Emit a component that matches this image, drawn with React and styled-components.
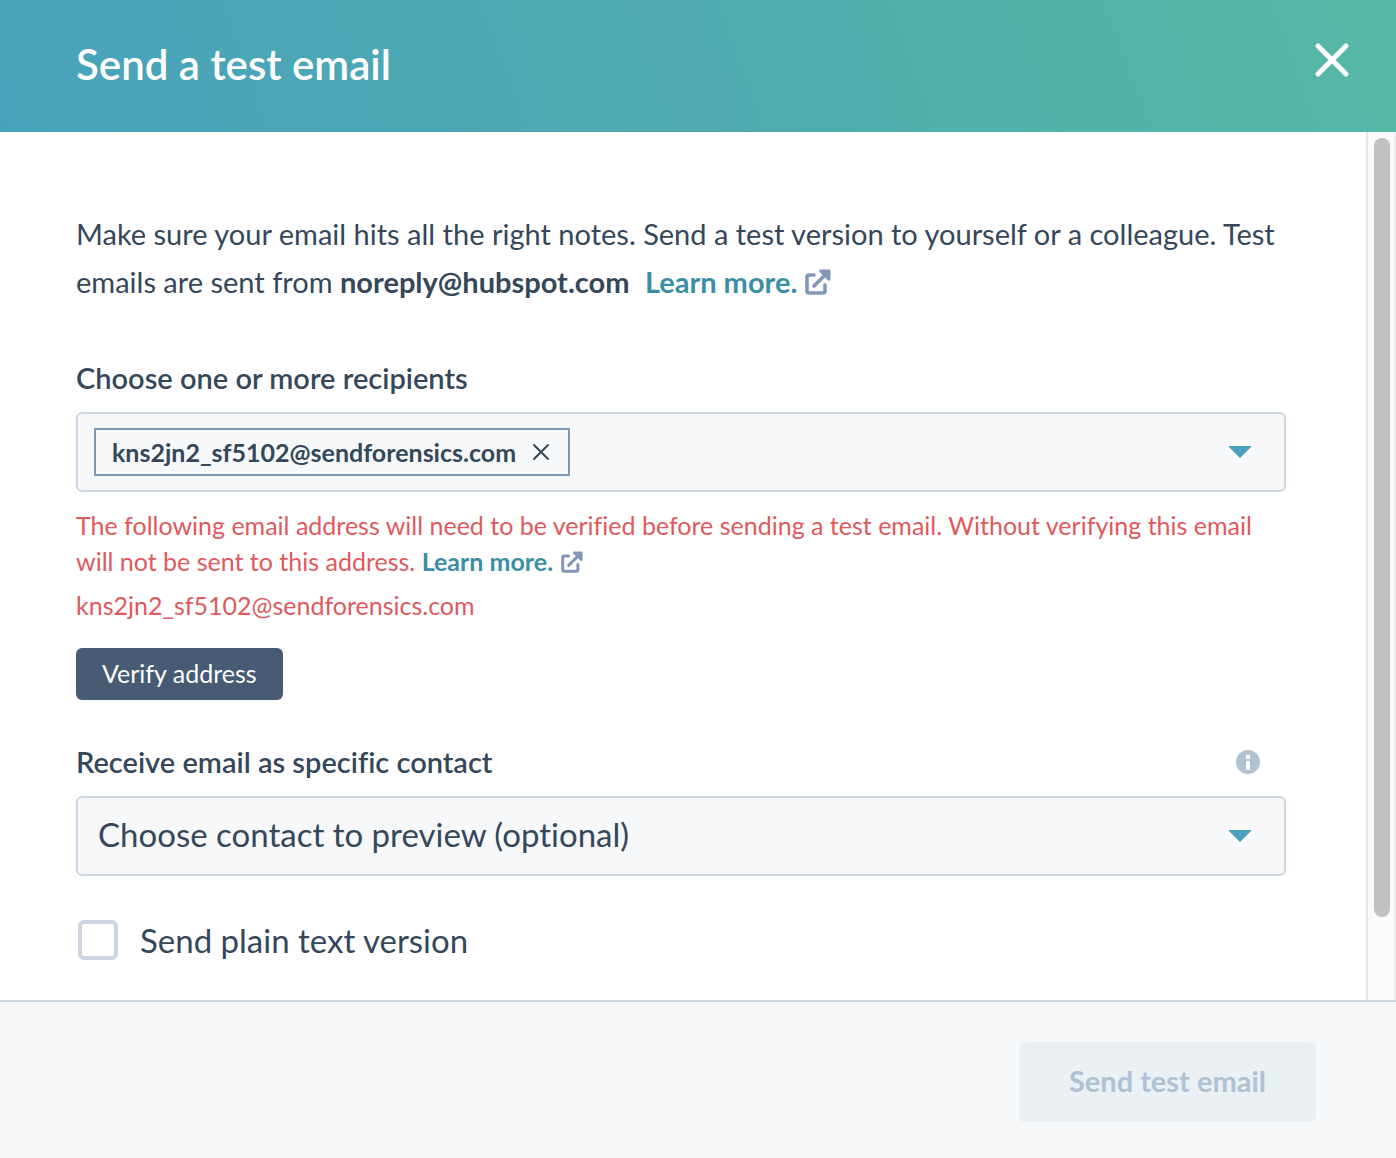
import React, { useState } from 'react';
import styled, { createGlobalStyle } from 'styled-components';

const GlobalStyle = createGlobalStyle`
  * {
    box-sizing: border-box;
  }

  body {
    margin: 0;
    color: #35475a;
    font-family: Lato, 'Open Sans', sans-serif;
    font-variant-ligatures: none;
  }

  button,
  select,
  input {
    font-family: inherit;
    font-variant-ligatures: inherit;
    color: inherit;
  }
`;

const Panel = styled.div`
  display: flex;
  flex-direction: column;
  min-height: 100vh;
  background: #ffffff;
`;

const Header = styled.header`
  display: flex;
  align-items: flex-start;
  justify-content: space-between;
  padding: 38px 42px 42px 76px;
  background: linear-gradient(70deg, #48a2bb 0%, #4fabb0 50%, #56b9a6 100%);
`;

const Title = styled.h1`
  margin: 0;
  color: #ffffff;
  font-size: 42px;
  font-weight: 600;
  line-height: 52px;
`;

const IconButton = styled.button`
  display: flex;
  align-items: center;
  justify-content: center;
  padding: 0;
  border: none;
  background: none;
  cursor: pointer;
`;

const CloseButton = styled(IconButton)`
  padding: 2px;
  color: #ffffff;
`;

const Body = styled.div`
  display: flex;
  flex: 1;
`;

const Content = styled.main`
  flex: 1;
  min-width: 0;
  padding: 78px 80px 40px 76px;
`;

const ScrollTrack = styled.div`
  width: 30px;
  padding: 6px 4px 6px 6px;
  border-left: 2px solid #e6e6e6;
  border-right: 2px solid #eeeeee;
  background: #fafafa;
`;

const ScrollThumb = styled.div`
  height: 91%;
  border-radius: 8px;
  background: #c1c1c1;
`;

const Intro = styled.p`
  margin: 0 0 50px;
  font-size: 29px;
  line-height: 48px;
`;

const LearnMoreLink = styled.a`
  margin-left: ${props => props.$gap || '0'};
  color: #3b8ea5;
  font-weight: 700;
  text-decoration: none;

  svg {
    margin-left: 8px;
    vertical-align: -2px;
  }
`;

const LabelRow = styled.div`
  display: flex;
  align-items: center;
  justify-content: space-between;
  padding-right: 26px;
  margin-bottom: 12px;
`;

const Label = styled.label`
  font-size: 29px;
  font-weight: 600;
  line-height: 44px;
`;

const RecipientBox = styled.div`
  display: flex;
  align-items: center;
  height: 80px;
  padding: 0 32px 0 16px;
  border: 2px solid #cbd6e2;
  border-radius: 6px;
  background: #f6f8fa;
`;

const Tag = styled.span`
  display: flex;
  align-items: center;
  gap: 16px;
  height: 48px;
  padding: 0 18px 0 16px;
  border: 2px solid #7c98b6;
  font-size: 25px;
  font-weight: 700;
`;

const RecipientInput = styled.input`
  flex: 1;
  min-width: 0;
  border: none;
  outline: none;
  background: transparent;
  font-size: 25px;
`;

const ErrorText = styled.p`
  margin: ${props => props.$top} 0 0;
  color: #e0595c;
  font-size: 25px;
  line-height: 36px;
`;

const Button = styled.button`
  border: none;
  border-radius: 6px;
  cursor: pointer;
`;

const VerifyButton = styled(Button)`
  display: block;
  height: 52px;
  margin: 25px 0 40px;
  padding: 0 26px 2px;
  background: #485b74;
  color: #ffffff;
  font-size: 25px;
`;

const SelectWrapper = styled.div`
  display: grid;
  align-items: center;

  > * {
    grid-area: 1 / 1;
  }

  svg {
    justify-self: end;
    margin-right: 34px;
    pointer-events: none;
  }
`;

const Select = styled.select`
  appearance: none;
  width: 100%;
  height: 80px;
  padding: 0 72px 4px 20px;
  border: 2px solid #cbd6e2;
  border-radius: 6px;
  background: #f6f8fa;
  font-size: 33px;
`;

const CheckboxRow = styled.label`
  display: flex;
  align-items: center;
  gap: 22px;
  margin-top: 44px;
  padding-left: 2px;
  font-size: 33px;
  line-height: 40px;
`;

const Checkbox = styled.input`
  appearance: none;
  width: 40px;
  height: 40px;
  margin: 0;
  border: 4px solid #cbd6e2;
  border-radius: 6px;
  background: #ffffff;

  &:checked {
    background: #48a2bb;
  }
`;

const Footer = styled.footer`
  display: flex;
  justify-content: flex-end;
  padding: 40px 80px 36px;
  border-top: 2px solid #cbd6e2;
  background: #f6f8fa;
`;

const SendButton = styled(Button)`
  height: 80px;
  padding: 0 50px 4px;
  background: #eaf0f4;
  color: #b0c1d4;
  font-size: 29px;
  font-weight: 700;
`;

const CrossIcon = ({ size, inset, stroke }) => {
  const end = size - inset;

  return (
    <svg width={size} height={size} viewBox={`0 0 ${size} ${size}`} aria-hidden="true">
      <path
        d={`M${inset} ${inset}L${end} ${end}M${end} ${inset}L${inset} ${end}`}
        stroke="currentColor"
        strokeWidth={stroke}
        strokeLinecap="round"
        fill="none"
      />
    </svg>
  );
};

const ExternalIcon = ({ size }) => (
  <svg width={size} height={size} viewBox="0 0 26 26" aria-hidden="true">
    <path
      d="M9 6H4Q2 6 2 8V22Q2 24 4 24H18Q20 24 20 22V16"
      fill="none"
      stroke="#8297b5"
      strokeWidth="3.6"
      strokeLinecap="round"
    />
    <path d="M9 17L21 5" stroke="#8297b5" strokeWidth="3.6" strokeLinecap="round" />
    <path
      d="M15.5 0.5H24.5Q25.5 0.5 25.5 1.5V10.5Q24.5 12.5 23 11.5L14.500 3Q13.500 1 15.500 0.500Z"
      fill="#8297b5"
    />
  </svg>
);

const CaretIcon = () => (
  <svg width="24" height="12" viewBox="0 0 24 12" aria-hidden="true">
    <path d="M0 0H24L12 12Z" fill="#48a2bb" />
  </svg>
);

const InfoIcon = () => (
  <svg width="24" height="24" viewBox="0 0 24 24" aria-hidden="true">
    <circle cx="12" cy="12" r="12" fill="#b0c1d4" />
    <path d="M10 5H14V9H10ZM10 11H14V20H10Z" fill="#ffffff" />
  </svg>
);

const App = () => {
  const [recipients, setRecipients] = useState(['kns2jn2_sf5102@sendforensics.com']);
  const [plainText, setPlainText] = useState(false);

  const removeRecipient = (email) => {
    setRecipients(recipients.filter(item => item !== email));
  };

  return (
    <>
      <GlobalStyle />
      <Panel>
        <Header>
          <Title>Send a test email</Title>
          <CloseButton aria-label="Close">
            <CrossIcon size={40} inset={6} stroke={5} />
          </CloseButton>
        </Header>

        <Body>
          <Content>
            <Intro>
              Make sure your email hits all the right notes. Send a test version to yourself or a
              colleague. Test emails are sent from <strong>noreply@hubspot.com</strong>{' '}
              <LearnMoreLink href="#learn-more" $gap="8px">
                Learn more.
                <ExternalIcon size={26} />
              </LearnMoreLink>
            </Intro>

            <LabelRow>
              <Label htmlFor="recipients">Choose one or more recipients</Label>
            </LabelRow>
            <RecipientBox>
              {recipients.map(email => (
                <Tag key={email}>
                  {email}
                  <IconButton aria-label={`Remove ${email}`} onClick={() => removeRecipient(email)}>
                    <CrossIcon size={18} inset={2} stroke={2} />
                  </IconButton>
                </Tag>
              ))}
              <RecipientInput id="recipients" type="text" />
              <IconButton aria-label="Show recipients">
                <CaretIcon />
              </IconButton>
            </RecipientBox>

            <ErrorText $top="15px">
              The following email address will need to be verified before sending a test email.
              Without verifying this email will not be sent to this address.{' '}
              <LearnMoreLink href="#verify-help">
                Learn more.
                <ExternalIcon size={22} />
              </LearnMoreLink>
            </ErrorText>
            <ErrorText $top="8px">kns2jn2_sf5102@sendforensics.com</ErrorText>
            <VerifyButton type="button">Verify address</VerifyButton>

            <LabelRow>
              <Label htmlFor="contact">Receive email as specific contact</Label>
              <InfoIcon />
            </LabelRow>
            <SelectWrapper>
              <Select id="contact" defaultValue="">
                <option value="">Choose contact to preview (optional)</option>
              </Select>
              <CaretIcon />
            </SelectWrapper>

            <CheckboxRow>
              <Checkbox
                type="checkbox"
                checked={plainText}
                onChange={e => setPlainText(e.target.checked)}
              />
              Send plain text version
            </CheckboxRow>
          </Content>
          <ScrollTrack>
            <ScrollThumb />
          </ScrollTrack>
        </Body>

        <Footer>
          <SendButton type="button" disabled>
            Send test email
          </SendButton>
        </Footer>
      </Panel>
    </>
  );
};

export default App;
